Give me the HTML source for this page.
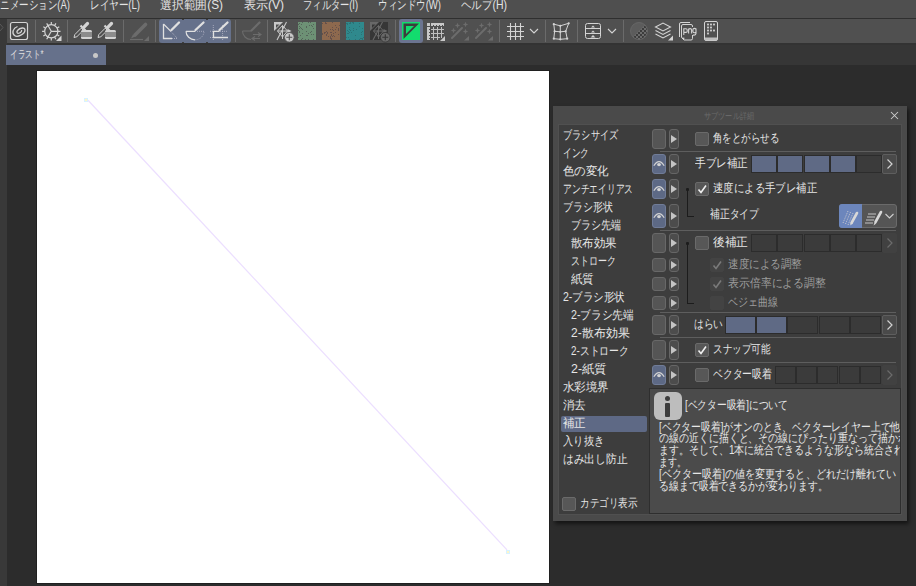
<!DOCTYPE html>
<html><head><meta charset="utf-8"><style>*{margin:0;padding:0;box-sizing:border-box}
html,body{width:916px;height:586px;overflow:hidden;background:#2c2c2c;font-family:"Liberation Sans",sans-serif;}
.a{position:absolute}
.t{position:absolute;white-space:nowrap;transform-origin:0 50%}
.eye{left:652px;width:14px;background:#555;border:1px solid #686868;border-radius:3px}
.eye.on{background:#5d6985;border-color:#707c98}
.eye svg,.arr svg,.gt svg,.cb svg{position:absolute;left:0;top:0}
.arr{left:669px;width:10px;background:#4c4c4c;border:1px solid #666;border-radius:3px}
.tree{border-left:1px solid #1c1c1c;border-bottom:1px solid #1c1c1c}
.dot{width:3px;height:3px;background:#1c1c1c;border-radius:1px}
.cb{width:14px;height:14px;background:#575757;border:1px solid #6a6a6a;border-radius:2px}
.cb.dis{background:#434343;border-color:#434343}
.seg{height:18px;border:1px solid #2c2c2c}
.gt{left:882px;width:15px;height:20px;background:#4a4a4a;border:1px solid #5e5e5e;border-radius:2px}
.gt.dis{background:#414141;border-color:#414141}
.sep{position:absolute;top:20px;width:1px;height:22px;background:#6b6b6b}
</style></head><body>
<div class="a" style="left:0;top:0;width:916px;height:18px;background:#4f4f4f"></div>
<div class="a" style="left:0;top:18px;width:916px;height:1px;background:#2f2f2f"></div>
<div class="a" style="left:0;top:19px;width:7px;height:567px;background:#393939"></div>
<div class="a" style="left:7px;top:19px;width:909px;height:24px;background:#505050"></div>
<div class="a" style="left:7px;top:43px;width:909px;height:2px;background:#333"></div>
<div class="a" style="left:7px;top:45px;width:909px;height:20px;background:#363636"></div>
<div class="t" style="left:-9px;top:-2.0px;color:#e4e4e4;font-size:12px;line-height:14px;transform:scaleX(0.7900)">アニメーション(A)</div>
<div class="t" style="left:90px;top:-2.0px;color:#e4e4e4;font-size:12px;line-height:14px;transform:scaleX(0.7978)">レイヤー(L)</div>
<div class="t" style="left:160px;top:-2.0px;color:#e4e4e4;font-size:12px;line-height:14px;transform:scaleX(0.9844)">選択範囲(S)</div>
<div class="t" style="left:244px;top:-2.0px;color:#e4e4e4;font-size:12px;line-height:14px;transform:scaleX(1.0000)">表示(V)</div>
<div class="t" style="left:303px;top:-2.0px;color:#e4e4e4;font-size:12px;line-height:14px;transform:scaleX(0.7711)">フィルター(I)</div>
<div class="t" style="left:378px;top:-2.0px;color:#e4e4e4;font-size:12px;line-height:14px;transform:scaleX(0.7942)">ウィンドウ(W)</div>
<div class="t" style="left:461px;top:-2.0px;color:#e4e4e4;font-size:12px;line-height:14px;transform:scaleX(0.8733)">ヘルプ(H)</div>
<div class="sep" style="left:35px"></div>
<div class="sep" style="left:67px"></div>
<div class="sep" style="left:123px"></div>
<div class="sep" style="left:155px"></div>
<div class="sep" style="left:235px"></div>
<div class="sep" style="left:267px"></div>
<div class="sep" style="left:395px"></div>
<div class="sep" style="left:499px"></div>
<div class="sep" style="left:545px"></div>
<div class="sep" style="left:577px"></div>
<div class="sep" style="left:623px"></div>
<div class="a" style="left:159px;top:19px;width:72px;height:24px;background:#66718b;border-radius:3px"></div>
<div class="a" style="left:182px;top:19px;width:2px;height:1px;background:#3e3e3e"></div><div class="a" style="left:182px;top:42px;width:2px;height:1px;background:#3e3e3e"></div>
<div class="a" style="left:206px;top:19px;width:2px;height:1px;background:#3e3e3e"></div><div class="a" style="left:206px;top:42px;width:2px;height:1px;background:#3e3e3e"></div>
<div class="a" style="left:399px;top:19px;width:24px;height:24px;background:#6b7490;border-radius:3px"></div>
<svg class="a" style="left:0;top:0" width="916" height="45"><rect x="10.5" y="22.5" width="17" height="17" rx="2" fill="#474747" stroke="#d4d4d4" stroke-width="1.2"/><path d="M17.5 26.5C13 28 11.5 33 14.5 35.5C17.5 38 25 34 25 30C25 27 20 27.5 17.5 30.5C16 32.5 17.5 34 19.5 33C21 32.3 22 31 21.5 30" fill="none" stroke="#d4d4d4" stroke-width="1.3"/><circle cx="51.3" cy="31.3" r="6.6" fill="none" stroke="#d4d4d4" stroke-width="1.2"/><path d="M58.00 31.30L60.50 31.30M57.10 34.65L59.27 35.90M54.65 37.10L55.90 39.27M51.30 38.00L51.30 40.50M47.95 37.10L46.70 39.27M45.50 34.65L43.33 35.90M44.60 31.30L42.10 31.30M45.50 27.95L43.33 26.70M47.95 25.50L46.70 23.33M51.30 24.60L51.30 22.10M54.65 25.50L55.90 23.33M57.10 27.95L59.27 26.70" stroke="#d4d4d4" stroke-width="1.2"/><path d="M51.3 31.3L57.9 31.3M51.3 31.3L47.8 25.3M51.3 31.3L47.8 37.3" stroke="#d4d4d4" stroke-width="1.2"/><path d="M56 41L61.5 35.5V41Z" fill="#d4d4d4"/><g transform="translate(0,0)"><path d="M74 37.5L74.8 34.6L81.2 28.2L83.3 30.3L76.9 36.7Z" fill="#505050" stroke="#d4d4d4" stroke-width="1"/><path d="M80.5 25.5L85.5 30.5" stroke="#d4d4d4" stroke-width="2.2"/><path d="M84.2 26.8L87.5 23.5" stroke="#d4d4d4" stroke-width="3.2" stroke-linecap="round"/><rect x="81" y="30" width="11" height="9" rx="1.5" fill="#d4d4d4"/><rect x="81" y="32" width="11" height="5" fill="#8c8c8c"/></g><g transform="translate(24,0)"><path d="M74 37.5L74.8 34.6L81.2 28.2L83.3 30.3L76.9 36.7Z" fill="#505050" stroke="#d4d4d4" stroke-width="1"/><path d="M80.5 25.5L85.5 30.5" stroke="#d4d4d4" stroke-width="2.2"/><path d="M84.2 26.8L87.5 23.5" stroke="#d4d4d4" stroke-width="3.2" stroke-linecap="round"/><rect x="81" y="30" width="11" height="9" rx="1.5" fill="#d4d4d4"/><rect x="81" y="32" width="11" height="5" fill="#8c8c8c"/></g><path d="M135 35L145.5 24.5" stroke="#6c6c6c" stroke-width="3.6" stroke-linecap="round"/><path d="M131 38.5L133 34.5L135 36.5Z" fill="#6c6c6c"/><path d="M130 39.5H143" stroke="#6c6c6c" stroke-width="1.2"/><path d="M144 41L149 36V41Z" fill="#6c6c6c"/><path d="M163.5 24V38.5H172" fill="none" stroke="#e0e0e0" stroke-width="1.3"/><path d="M163.5 24L171 31.5" stroke="#e0e0e0" stroke-width="1.1"/><path d="M171 31.5L177 38M172 38.5H177" stroke="#b8b8c8" stroke-width="0.8" stroke-dasharray="1 1"/><path d="M171.5 30L179 22.5" stroke="#e0e0e0" stroke-width="2.3" stroke-linecap="round"/><path d="M186 31.3H195M186 31.3A9 8.5 0 0 0 195 39.8" fill="none" stroke="#e0e0e0" stroke-width="1.2"/><path d="M195 31.3H204A9 8.5 0 0 1 195 39.8" fill="none" stroke="#b8b8c8" stroke-width="0.8" stroke-dasharray="1 1"/><path d="M195.5 30L203.5 22.5" stroke="#e0e0e0" stroke-width="2.3" stroke-linecap="round"/><path d="M213.3 25V40M222.6 25V40M210 31.3H228M210 37.5H213" stroke="#b8b8c8" stroke-width="0.8" stroke-dasharray="1 1"/><path d="M219.5 31.3H213.5V37.5H228" fill="none" stroke="#e0e0e0" stroke-width="1.3"/><path d="M219.5 30L227.5 22.5" stroke="#e0e0e0" stroke-width="2.3" stroke-linecap="round"/><path d="M242.5 31H251M242.5 31A8.5 8.5 0 0 0 251 39.5" fill="none" stroke="#6c6c6c" stroke-width="1.1"/><path d="M251.5 30.5L259.5 22.5" stroke="#6c6c6c" stroke-width="2.2" stroke-linecap="round"/><path d="M253 34.5H260M258 32.5L261 34.5L258 36.5M260 38.5H253M255 36.5L252 38.5L255 40.5" fill="none" stroke="#6c6c6c" stroke-width="1.1"/><g transform="translate(0,0)"><path d="M274 22H283L274 31Z" fill="#c8c8c8"/><path d="M276 24.5H279.5L276 28Z" fill="#505050"/><path d="M286.5 22L277 40" stroke="#c8c8c8" stroke-width="1.1"/><path d="M277.5 31L282.5 25.5L287.5 31L282.5 37ZM282.5 25.5V39M277.5 31H290" fill="none" stroke="#c8c8c8" stroke-width="1"/><path d="M287.5 29L291.5 31L287.5 33Z" fill="#c8c8c8"/><circle cx="289.3" cy="37.3" r="4.8" fill="#c8c8c8" stroke="#505050" stroke-width="0.8"/><path d="M289.3 34.3V40.3M286.3 37.3H292.3" stroke="#505050" stroke-width="1.1"/></g><rect x="298" y="22" width="18" height="18" fill="#6d9175"/><rect x="322" y="22" width="18" height="18" fill="#8d694e"/><rect x="346" y="22" width="18" height="18" fill="#2f898d"/><rect x="370" y="22" width="18" height="18" fill="#363636"/><rect x="305" y="39" width="1" height="1" fill="#55635a"/><rect x="302" y="33" width="1" height="1" fill="#55635a"/><rect x="313" y="24" width="1" height="1" fill="#55635a"/><rect x="298" y="37" width="1" height="1" fill="#55635a"/><rect x="313" y="39" width="1" height="1" fill="#55635a"/><rect x="302" y="29" width="1" height="1" fill="#55635a"/><rect x="302" y="38" width="1" height="1" fill="#55635a"/><rect x="310" y="22" width="1" height="1" fill="#55635a"/><rect x="300" y="27" width="1" height="1" fill="#55635a"/><rect x="299" y="31" width="1" height="1" fill="#55635a"/><rect x="298" y="30" width="1" height="1" fill="#55635a"/><rect x="313" y="34" width="1" height="1" fill="#55635a"/><rect x="311" y="34" width="1" height="1" fill="#55635a"/><rect x="312" y="26" width="1" height="1" fill="#55635a"/><rect x="309" y="25" width="1" height="1" fill="#55635a"/><rect x="299" y="26" width="1" height="1" fill="#55635a"/><rect x="313" y="28" width="1" height="1" fill="#55635a"/><rect x="306" y="35" width="1" height="1" fill="#55635a"/><rect x="307" y="35" width="1" height="1" fill="#55635a"/><rect x="308" y="22" width="1" height="1" fill="#55635a"/><rect x="306" y="27" width="1" height="1" fill="#55635a"/><rect x="308" y="39" width="1" height="1" fill="#55635a"/><rect x="301" y="28" width="1" height="1" fill="#55635a"/><rect x="306" y="31" width="1" height="1" fill="#55635a"/><rect x="301" y="24" width="1" height="1" fill="#55635a"/><rect x="300" y="35" width="1" height="1" fill="#55635a"/><rect x="302" y="22" width="1" height="1" fill="#55635a"/><rect x="307" y="35" width="1" height="1" fill="#55635a"/><rect x="311" y="25" width="1" height="1" fill="#55635a"/><rect x="299" y="23" width="1" height="1" fill="#55635a"/><rect x="310" y="32" width="1" height="1" fill="#55635a"/><rect x="299" y="31" width="1" height="1" fill="#55635a"/><rect x="298" y="24" width="1" height="1" fill="#55635a"/><rect x="301" y="39" width="1" height="1" fill="#55635a"/><rect x="299" y="28" width="1" height="1" fill="#55635a"/><rect x="311" y="31" width="1" height="1" fill="#55635a"/><rect x="306" y="26" width="1" height="1" fill="#55635a"/><rect x="299" y="32" width="1" height="1" fill="#55635a"/><rect x="308" y="33" width="1" height="1" fill="#55635a"/><rect x="326" y="34" width="1" height="1" fill="#65504a"/><rect x="334" y="36" width="1" height="1" fill="#65504a"/><rect x="338" y="34" width="1" height="1" fill="#65504a"/><rect x="339" y="25" width="1" height="1" fill="#65504a"/><rect x="338" y="30" width="1" height="1" fill="#65504a"/><rect x="335" y="29" width="1" height="1" fill="#65504a"/><rect x="331" y="35" width="1" height="1" fill="#65504a"/><rect x="330" y="38" width="1" height="1" fill="#65504a"/><rect x="331" y="39" width="1" height="1" fill="#65504a"/><rect x="332" y="22" width="1" height="1" fill="#65504a"/><rect x="335" y="32" width="1" height="1" fill="#65504a"/><rect x="322" y="34" width="1" height="1" fill="#65504a"/><rect x="326" y="23" width="1" height="1" fill="#65504a"/><rect x="332" y="36" width="1" height="1" fill="#65504a"/><rect x="333" y="33" width="1" height="1" fill="#65504a"/><rect x="330" y="37" width="1" height="1" fill="#65504a"/><rect x="322" y="23" width="1" height="1" fill="#65504a"/><rect x="322" y="33" width="1" height="1" fill="#65504a"/><rect x="330" y="36" width="1" height="1" fill="#65504a"/><rect x="331" y="32" width="1" height="1" fill="#65504a"/><rect x="327" y="33" width="1" height="1" fill="#65504a"/><rect x="327" y="32" width="1" height="1" fill="#65504a"/><rect x="333" y="30" width="1" height="1" fill="#65504a"/><rect x="331" y="34" width="1" height="1" fill="#65504a"/><rect x="325" y="22" width="1" height="1" fill="#65504a"/><rect x="326" y="31" width="1" height="1" fill="#65504a"/><rect x="338" y="29" width="1" height="1" fill="#65504a"/><rect x="330" y="29" width="1" height="1" fill="#65504a"/><rect x="332" y="27" width="1" height="1" fill="#65504a"/><rect x="335" y="25" width="1" height="1" fill="#65504a"/><rect x="325" y="32" width="1" height="1" fill="#65504a"/><rect x="332" y="29" width="1" height="1" fill="#65504a"/><rect x="336" y="27" width="1" height="1" fill="#65504a"/><rect x="324" y="32" width="1" height="1" fill="#65504a"/><rect x="328" y="36" width="1" height="1" fill="#65504a"/><rect x="330" y="29" width="1" height="1" fill="#65504a"/><rect x="325" y="23" width="1" height="1" fill="#65504a"/><rect x="338" y="28" width="1" height="1" fill="#65504a"/><rect x="332" y="27" width="1" height="1" fill="#65504a"/><rect x="330" y="32" width="1" height="1" fill="#65504a"/><rect x="324" y="33" width="1" height="1" fill="#65504a"/><rect x="326" y="35" width="1" height="1" fill="#65504a"/><rect x="331" y="38" width="1" height="1" fill="#65504a"/><rect x="330" y="36" width="1" height="1" fill="#65504a"/><rect x="333" y="35" width="1" height="1" fill="#65504a"/><rect x="355" y="35" width="1" height="1" fill="#2c7074"/><rect x="359" y="23" width="1" height="1" fill="#2c7074"/><rect x="359" y="26" width="1" height="1" fill="#2c7074"/><rect x="352" y="22" width="1" height="1" fill="#2c7074"/><rect x="361" y="38" width="1" height="1" fill="#2c7074"/><rect x="359" y="39" width="1" height="1" fill="#2c7074"/><rect x="353" y="23" width="1" height="1" fill="#2c7074"/><rect x="360" y="38" width="1" height="1" fill="#2c7074"/><rect x="355" y="39" width="1" height="1" fill="#2c7074"/><rect x="356" y="29" width="1" height="1" fill="#2c7074"/><rect x="348" y="31" width="1" height="1" fill="#2c7074"/><rect x="349" y="29" width="1" height="1" fill="#2c7074"/><rect x="347" y="23" width="1" height="1" fill="#2c7074"/><rect x="362" y="28" width="1" height="1" fill="#2c7074"/><rect x="359" y="23" width="1" height="1" fill="#2c7074"/><rect x="346" y="37" width="1" height="1" fill="#2c7074"/><rect x="349" y="27" width="1" height="1" fill="#2c7074"/><rect x="362" y="31" width="1" height="1" fill="#2c7074"/><rect x="353" y="22" width="1" height="1" fill="#2c7074"/><rect x="362" y="39" width="1" height="1" fill="#2c7074"/><rect x="359" y="23" width="1" height="1" fill="#2c7074"/><rect x="349" y="32" width="1" height="1" fill="#2c7074"/><rect x="350" y="30" width="1" height="1" fill="#2c7074"/><rect x="363" y="37" width="1" height="1" fill="#2c7074"/><rect x="347" y="33" width="1" height="1" fill="#2c7074"/><rect x="353" y="28" width="1" height="1" fill="#2c7074"/><rect x="349" y="39" width="1" height="1" fill="#2c7074"/><rect x="349" y="27" width="1" height="1" fill="#2c7074"/><rect x="353" y="30" width="1" height="1" fill="#2c7074"/><rect x="350" y="22" width="1" height="1" fill="#2c7074"/><rect x="361" y="34" width="1" height="1" fill="#2c7074"/><rect x="347" y="30" width="1" height="1" fill="#2c7074"/><rect x="353" y="30" width="1" height="1" fill="#2c7074"/><rect x="362" y="38" width="1" height="1" fill="#2c7074"/><rect x="359" y="23" width="1" height="1" fill="#2c7074"/><rect x="361" y="32" width="1" height="1" fill="#2c7074"/><rect x="346" y="23" width="1" height="1" fill="#2c7074"/><rect x="350" y="23" width="1" height="1" fill="#2c7074"/><rect x="349" y="23" width="1" height="1" fill="#2c7074"/><rect x="348" y="37" width="1" height="1" fill="#2c7074"/><rect x="347" y="24" width="1" height="1" fill="#2c7074"/><rect x="362" y="38" width="1" height="1" fill="#2c7074"/><rect x="361" y="32" width="1" height="1" fill="#2c7074"/><rect x="351" y="32" width="1" height="1" fill="#2c7074"/><rect x="348" y="33" width="1" height="1" fill="#2c7074"/><g opacity="0.9"><g transform="translate(96,0)"><path d="M274 22H283L274 31Z" fill="#6e6e6e"/><path d="M276 24.5H279.5L276 28Z" fill="#363636"/><path d="M286.5 22L277 40" stroke="#6e6e6e" stroke-width="1.1"/><path d="M277.5 31L282.5 25.5L287.5 31L282.5 37ZM282.5 25.5V39M277.5 31H290" fill="none" stroke="#6e6e6e" stroke-width="1"/><path d="M287.5 29L291.5 31L287.5 33Z" fill="#6e6e6e"/><circle cx="289.3" cy="37.3" r="4.8" fill="#6e6e6e" stroke="#363636" stroke-width="0.8"/><path d="M289.3 34.3V40.3M286.3 37.3H292.3" stroke="#363636" stroke-width="1.1"/></g></g><rect x="402" y="22" width="18" height="18" fill="#12dc6e"/><path d="M403.5 23.5H419L403.5 39Z" fill="#3c3c3c"/><path d="M406 26H414L406 34Z" fill="#12dc6e"/><rect x="427" y="23" width="3" height="3" fill="#c8c8c8"/><rect x="431" y="23" width="13" height="3" fill="#c8c8c8"/><rect x="427" y="27" width="3" height="13" fill="#c8c8c8"/><path d="M433 25.5h1M436 25.5h1M439 25.5h1M442 25.5h1M429.5 29v1M429.5 32v1M429.5 35v1M429.5 38v1" stroke="#505050" stroke-width="1"/><path d="M433.5 27V40M437.5 27V40M441.5 27V38M431 29.5H444M431 33.5H444M431 37.5H440" stroke="#c0c0c0" stroke-width="1"/><path d="M440 41L445 36V41Z" fill="#c8c8c8"/><g transform="translate(0,0)"><path d="M452 38L462 28" stroke="#6c6c6c" stroke-width="2" stroke-linecap="round"/><path d="M457.5 22.7L458.3 24.7L460.3 25.5L458.3 26.3L457.5 28.3L456.7 26.3L454.7 25.5L456.7 24.7Z" fill="#6c6c6c"/><path d="M465.5 21.7L466.3 23.7L468.3 24.5L466.3 25.3L465.5 27.3L464.7 25.3L462.7 24.5L464.7 23.7Z" fill="#6c6c6c"/><path d="M453.5 27.7L454.3 29.7L456.3 30.5L454.3 31.3L453.5 33.3L452.7 31.3L450.7 30.5L452.7 29.7Z" fill="#6c6c6c"/><path d="M465.5 28.7L466.3 30.7L468.3 31.5L466.3 32.3L465.5 34.3L464.7 32.3L462.7 31.5L464.7 30.7Z" fill="#6c6c6c"/><path d="M464 40.5L469 36V40.5Z" fill="#6c6c6c"/></g><g transform="translate(24,0)"><path d="M452 38L462 28" stroke="#6c6c6c" stroke-width="2" stroke-linecap="round"/><path d="M457.5 22.7L458.3 24.7L460.3 25.5L458.3 26.3L457.5 28.3L456.7 26.3L454.7 25.5L456.7 24.7Z" fill="#6c6c6c"/><path d="M465.5 21.7L466.3 23.7L468.3 24.5L466.3 25.3L465.5 27.3L464.7 25.3L462.7 24.5L464.7 23.7Z" fill="#6c6c6c"/><path d="M453.5 27.7L454.3 29.7L456.3 30.5L454.3 31.3L453.5 33.3L452.7 31.3L450.7 30.5L452.7 29.7Z" fill="#6c6c6c"/><path d="M465.5 28.7L466.3 30.7L468.3 31.5L466.3 32.3L465.5 34.3L464.7 32.3L462.7 31.5L464.7 30.7Z" fill="#6c6c6c"/><path d="M464 40.5L469 36V40.5Z" fill="#6c6c6c"/></g><path d="M510.5 23V40M515.5 23V40M520.5 23V40M507 26.5H524M507 31.5H524M507 36.5H524" stroke="#d4d4d4" stroke-width="1.1"/><path d="M530 29L534 33L538 29" fill="none" stroke="#d4d4d4" stroke-width="1.1"/><path d="M553.8 24.2L560.3 25.8L568.7 23.3L565.7 31.3L567.2 38.7L560.3 39.3L553.8 38.7L554.6 31.3L553.8 24.2M554.6 31.3L560.3 31.8L565.7 31.3M560.3 25.8L560.3 31.8L560.3 39.3" fill="none" stroke="#d4d4d4" stroke-width="1"/><circle cx="553.8" cy="24.2" r="1.1" fill="#d4d4d4"/><circle cx="560.3" cy="25.8" r="1.1" fill="#d4d4d4"/><circle cx="568.7" cy="23.3" r="1.1" fill="#d4d4d4"/><circle cx="554.6" cy="31.3" r="1.1" fill="#d4d4d4"/><circle cx="560.3" cy="31.8" r="1.1" fill="#d4d4d4"/><circle cx="565.7" cy="31.3" r="1.1" fill="#d4d4d4"/><circle cx="553.8" cy="38.7" r="1.1" fill="#d4d4d4"/><circle cx="560.3" cy="39.3" r="1.1" fill="#d4d4d4"/><circle cx="567.2" cy="38.7" r="1.1" fill="#d4d4d4"/><rect x="585.5" y="23.5" width="15" height="15" rx="2" fill="none" stroke="#d4d4d4" stroke-width="1"/><path d="M585.5 28.5H600.5M585.5 33.5H600.5" stroke="#d4d4d4" stroke-width="1"/><path d="M591 27.5L593 25.5L595 27.5ZM591 32.5L593 30.5L595 32.5ZM590.5 37.5L593 35L595.5 37.5Z" fill="#d4d4d4"/><path d="M608 29L612 33L616 29" fill="none" stroke="#d4d4d4" stroke-width="1.1"/><defs><clipPath id="cc"><circle cx="639" cy="31" r="8.5"/></clipPath><pattern id="chk" x="630" y="22" width="4" height="4" patternUnits="userSpaceOnUse"><rect width="4" height="4" fill="#3c3c3c"/><rect width="2" height="2" fill="#6c6c6c"/><rect x="2" y="2" width="2" height="2" fill="#6c6c6c"/></pattern></defs><g clip-path="url(#cc)"><rect x="630" y="22" width="18" height="18" fill="#5c5c5c"/><path d="M648 22V40H630Z" fill="url(#chk)"/></g><circle cx="639" cy="31" r="8.5" fill="none" stroke="#6a6a6a" stroke-width="0.8"/><path d="M655.5 27L663 23L670.5 27L663 31Z" fill="none" stroke="#d4d4d4" stroke-width="1.1"/><path d="M655.5 30.5L663 34.5L670.5 30.5M655.5 34L663 38L670.5 34" fill="none" stroke="#d4d4d4" stroke-width="1.1"/><path d="M668 40.5L673 35.5V40.5Z" fill="#d4d4d4"/><path d="M679.5 37V24Q679.5 22.5 681 22.5H690" fill="none" stroke="#d4d4d4" stroke-width="1"/><path d="M681.5 37.5V26Q681.5 24.5 683 24.5H691Q692.5 24.5 692.5 26V38.5Q692.5 40 691 40H684Z" fill="#505050" stroke="#d4d4d4" stroke-width="1"/><path d="M681.5 37.5L684 40L684.5 37.8Z" fill="#d4d4d4"/><rect x="683" y="27" width="13.5" height="8" fill="#505050"/><path d="M683.8 28.3V35M683.8 28.8h2.2q1.2 0 1.2 1.2v1.2q0 1.2 -1.2 1.2h-2.2M688.6 33.4V28.6M688.6 29.5q0.6 -0.9 1.6 -0.9q1.4 0 1.4 1.4v3.4M696 28.5v4.8q0 1.8 -1.8 1.8h-1.2M696 29q-0.6 -0.6 -1.6 -0.6q-1.5 0 -1.5 1.5v1.3q0 1.5 1.5 1.5q1 0 1.6 -0.6" fill="none" stroke="#d4d4d4" stroke-width="1.1"/><rect x="704.5" y="21.5" width="13" height="19" rx="1.5" fill="none" stroke="#d4d4d4" stroke-width="1"/><rect x="705" y="37.5" width="12" height="3" fill="#bdbdbd"/><rect x="707.1" y="23.6" width="1.8" height="1.8" fill="#d4d4d4"/><rect x="707.1" y="26.6" width="1.8" height="1.8" fill="#d4d4d4"/><rect x="707.1" y="29.6" width="1.8" height="1.8" fill="#d4d4d4"/><rect x="707.1" y="32.6" width="1.8" height="1.8" fill="#d4d4d4"/><rect x="710.1" y="23.6" width="1.8" height="1.8" fill="#d4d4d4"/><rect x="710.1" y="26.6" width="1.8" height="1.8" fill="#d4d4d4"/><rect x="710.1" y="29.6" width="1.8" height="1.8" fill="#d4d4d4"/><rect x="713.1" y="23.6" width="1.8" height="1.8" fill="#d4d4d4"/><rect x="713.1" y="29.6" width="1.8" height="1.8" fill="#d4d4d4"/><path d="M0 24L3 27.5L0 31" fill="none" stroke="#5a5a5a" stroke-width="1"/></svg>
<div class="a" style="left:6px;top:45px;width:100px;height:20px;background:#66718b"></div>
<div class="t" style="left:10px;top:46.5px;color:#e0e0e0;font-size:11px;line-height:14px;transform:scaleX(0.6939)">イラスト*</div>
<div class="a" style="left:93px;top:53px;width:5px;height:5px;border-radius:50%;background:#c8c8c8"></div>
<div class="a" style="left:7px;top:65px;width:909px;height:521px;background:#2c2c2c"></div>
<div class="a" style="left:36px;top:70px;width:514px;height:514px;background:#202020"></div>
<div class="a" style="left:37px;top:71px;width:512px;height:512px;background:#fff"></div>
<svg class="a" style="left:0;top:0" width="916" height="586"><line x1="88" y1="100.3" x2="507" y2="549.9" stroke="#ecdfff" stroke-width="1.25"/><rect x="84.5" y="98.5" width="3" height="3" fill="#fff6c8" stroke="#d8f2ff" stroke-width="1"/><rect x="506.5" y="550.5" width="3" height="3" fill="#fff6c8" stroke="#d8f2ff" stroke-width="1"/></svg>
<div class="a" style="left:553px;top:106px;width:354px;height:415px;background:#4a4a4a;box-shadow:2px 3px 4px rgba(0,0,0,0.55)"></div>
<div class="t" style="left:704px;top:111.0px;color:#6a6a6a;font-size:9px;line-height:10px;transform:scaleX(0.7937)">サブツール詳細</div>
<svg class="a" style="left:888px;top:109px" width="14" height="14"><path d="M3 3L10 10M10 3L3 10" stroke="#cccccc" stroke-width="1.05"/></svg>
<div class="a" style="left:558px;top:124px;width:344px;height:391px;background:#3d3d3d;border:1px solid #505050"></div>
<div class="a" style="left:561px;top:416px;width:86px;height:16px;background:#5e6985;border-radius:2px"></div>
<div class="t" style="left:563px;top:127.5px;color:#e6e6e6;font-size:12px;line-height:14px;transform:scaleX(0.7639)">ブラシサイズ</div>
<div class="t" style="left:563px;top:145.5px;color:#e6e6e6;font-size:12px;line-height:14px;transform:scaleX(0.7222)">インク</div>
<div class="t" style="left:563px;top:163.5px;color:#e6e6e6;font-size:12px;line-height:14px;transform:scaleX(0.9583)">色の変化</div>
<div class="t" style="left:563px;top:181.5px;color:#e6e6e6;font-size:12px;line-height:14px;transform:scaleX(0.7292)">アンチエイリアス</div>
<div class="t" style="left:563px;top:199.5px;color:#e6e6e6;font-size:12px;line-height:14px;transform:scaleX(0.8333)">ブラシ形状</div>
<div class="t" style="left:571px;top:217.5px;color:#e6e6e6;font-size:12px;line-height:14px;transform:scaleX(0.8333)">ブラシ先端</div>
<div class="t" style="left:571px;top:235.5px;color:#e6e6e6;font-size:12px;line-height:14px;transform:scaleX(0.9583)">散布効果</div>
<div class="t" style="left:571px;top:253.5px;color:#e6e6e6;font-size:12px;line-height:14px;transform:scaleX(0.7500)">ストローク</div>
<div class="t" style="left:571px;top:271.5px;color:#e6e6e6;font-size:12px;line-height:14px;transform:scaleX(0.9583)">紙質</div>
<div class="t" style="left:563px;top:289.5px;color:#e6e6e6;font-size:12px;line-height:14px;transform:scaleX(0.8773)">2-ブラシ形状</div>
<div class="t" style="left:571px;top:307.5px;color:#e6e6e6;font-size:12px;line-height:14px;transform:scaleX(0.8886)">2-ブラシ先端</div>
<div class="t" style="left:571px;top:325.5px;color:#e6e6e6;font-size:12px;line-height:14px;transform:scaleX(1.0022)">2-散布効果</div>
<div class="t" style="left:571px;top:343.5px;color:#e6e6e6;font-size:12px;line-height:14px;transform:scaleX(0.8179)">2-ストローク</div>
<div class="t" style="left:571px;top:361.5px;color:#e6e6e6;font-size:12px;line-height:14px;transform:scaleX(1.0325)">2-紙質</div>
<div class="t" style="left:563px;top:379.5px;color:#e6e6e6;font-size:12px;line-height:14px;transform:scaleX(0.9583)">水彩境界</div>
<div class="t" style="left:563px;top:397.5px;color:#e6e6e6;font-size:12px;line-height:14px;transform:scaleX(0.9583)">消去</div>
<div class="t" style="left:563px;top:415.5px;color:#e6e6e6;font-size:12px;line-height:14px;transform:scaleX(0.9583)">補正</div>
<div class="t" style="left:563px;top:433.5px;color:#e6e6e6;font-size:12px;line-height:14px;transform:scaleX(0.8542)">入り抜き</div>
<div class="t" style="left:563px;top:451.5px;color:#e6e6e6;font-size:12px;line-height:14px;transform:scaleX(0.8958)">はみ出し防止</div>
<div class="a eye" style="top:129px;height:20px"></div>
<div class="a arr" style="top:129px;height:20px"><svg width="8" height="18"><path d="M1 5.0L7 9.0L1 13.0Z" fill="#c4c4c4"/></svg></div>
<div class="a eye on" style="top:154px;height:20px"><svg width="12" height="18"><g transform="translate(0,0.0)"><path d="M0.8 10.8Q6 2.4 11.2 10.8" stroke="#d2d2d2" stroke-width="1.2" fill="none"/><ellipse cx="6" cy="9.6" rx="1.9" ry="1.6" fill="#d4d4d4"/></g></svg></div>
<div class="a arr" style="top:154px;height:20px"><svg width="8" height="18"><path d="M1 5.0L7 9.0L1 13.0Z" fill="#c4c4c4"/></svg></div>
<div class="a eye on" style="top:179px;height:20px"><svg width="12" height="18"><g transform="translate(0,0.0)"><path d="M0.8 10.8Q6 2.4 11.2 10.8" stroke="#d2d2d2" stroke-width="1.2" fill="none"/><ellipse cx="6" cy="9.6" rx="1.9" ry="1.6" fill="#d4d4d4"/></g></svg></div>
<div class="a arr" style="top:179px;height:20px"><svg width="8" height="18"><path d="M1 5.0L7 9.0L1 13.0Z" fill="#c4c4c4"/></svg></div>
<div class="a eye on" style="top:204px;height:24px"><svg width="12" height="22"><g transform="translate(0,2.0)"><path d="M0.8 10.8Q6 2.4 11.2 10.8" stroke="#d2d2d2" stroke-width="1.2" fill="none"/><ellipse cx="6" cy="9.6" rx="1.9" ry="1.6" fill="#d4d4d4"/></g></svg></div>
<div class="a arr" style="top:204px;height:24px"><svg width="8" height="22"><path d="M1 7.0L7 11.0L1 15.0Z" fill="#c4c4c4"/></svg></div>
<div class="a eye" style="top:233px;height:20px"></div>
<div class="a arr" style="top:233px;height:20px"><svg width="8" height="18"><path d="M1 5.0L7 9.0L1 13.0Z" fill="#c4c4c4"/></svg></div>
<div class="a eye" style="top:258px;height:14px"></div>
<div class="a arr" style="top:258px;height:14px"><svg width="8" height="12"><path d="M1 2.0L7 6.0L1 10.0Z" fill="#c4c4c4"/></svg></div>
<div class="a eye" style="top:277px;height:14px"></div>
<div class="a arr" style="top:277px;height:14px"><svg width="8" height="12"><path d="M1 2.0L7 6.0L1 10.0Z" fill="#c4c4c4"/></svg></div>
<div class="a eye" style="top:296px;height:14px"></div>
<div class="a arr" style="top:296px;height:14px"><svg width="8" height="12"><path d="M1 2.0L7 6.0L1 10.0Z" fill="#c4c4c4"/></svg></div>
<div class="a eye" style="top:315px;height:20px"></div>
<div class="a arr" style="top:315px;height:20px"><svg width="8" height="18"><path d="M1 5.0L7 9.0L1 13.0Z" fill="#c4c4c4"/></svg></div>
<div class="a eye" style="top:340px;height:20px"></div>
<div class="a arr" style="top:340px;height:20px"><svg width="8" height="18"><path d="M1 5.0L7 9.0L1 13.0Z" fill="#c4c4c4"/></svg></div>
<div class="a eye on" style="top:365px;height:20px"><svg width="12" height="18"><g transform="translate(0,0.0)"><path d="M0.8 10.8Q6 2.4 11.2 10.8" stroke="#d2d2d2" stroke-width="1.2" fill="none"/><ellipse cx="6" cy="9.6" rx="1.9" ry="1.6" fill="#d4d4d4"/></g></svg></div>
<div class="a arr" style="top:365px;height:20px"><svg width="8" height="18"><path d="M1 5.0L7 9.0L1 13.0Z" fill="#c4c4c4"/></svg></div>
<div class="a" style="left:660px;top:151px;width:236px;height:1px;background:#5e5e5e"></div>
<div class="a" style="left:660px;top:230px;width:236px;height:1px;background:#5e5e5e"></div>
<div class="a" style="left:660px;top:312px;width:236px;height:1px;background:#5e5e5e"></div>
<div class="a" style="left:660px;top:337px;width:236px;height:1px;background:#5e5e5e"></div>
<div class="a" style="left:660px;top:362px;width:236px;height:1px;background:#5e5e5e"></div>
<div class="a tree" style="left:687px;top:189px;width:7px;height:28px"></div><div class="a dot" style="left:686px;top:188px"></div>
<div class="a tree" style="left:687px;top:243px;width:7px;height:61px"></div><div class="a dot" style="left:686px;top:242px"></div>
<div class="a cb" style="left:695px;top:132px"></div>
<div class="a cb" style="left:695px;top:182px"><svg width="12" height="12"><path d="M2.5 6.5L5 9.5L10 2.5" stroke="#f0f0f0" stroke-width="1.6" fill="none"/></svg></div>
<div class="a cb" style="left:695px;top:236px"></div>
<div class="a cb dis" style="left:710px;top:258px"><svg width="12" height="12"><path d="M2.5 6.5L5 9.5L10 2.5" stroke="#7a7a7a" stroke-width="1.6" fill="none"/></svg></div>
<div class="a cb dis" style="left:710px;top:277px"><svg width="12" height="12"><path d="M2.5 6.5L5 9.5L10 2.5" stroke="#7a7a7a" stroke-width="1.6" fill="none"/></svg></div>
<div class="a cb dis" style="left:710px;top:296px"></div>
<div class="a cb" style="left:695px;top:343px"><svg width="12" height="12"><path d="M2.5 6.5L5 9.5L10 2.5" stroke="#f0f0f0" stroke-width="1.6" fill="none"/></svg></div>
<div class="a cb" style="left:695px;top:368px"></div>
<div class="a cb" style="left:562px;top:497px"></div>
<div class="t" style="left:580px;top:496.0px;color:#e6e6e6;font-size:12px;line-height:14px;transform:scaleX(0.7917)">カテゴリ表示</div>
<div class="t" style="left:713px;top:130.5px;color:#e6e6e6;font-size:12px;line-height:14px;transform:scaleX(0.7857)">角をとがらせる</div>
<div class="t" style="left:695px;top:155.5px;color:#e6e6e6;font-size:12px;line-height:14px;transform:scaleX(0.8833)">手ブレ補正</div>
<div class="t" style="left:713px;top:180.5px;color:#e6e6e6;font-size:12px;line-height:14px;transform:scaleX(0.8667)">速度による手ブレ補正</div>
<div class="t" style="left:710px;top:207.0px;color:#e6e6e6;font-size:12px;line-height:14px;transform:scaleX(0.8167)">補正タイプ</div>
<div class="t" style="left:713px;top:235.0px;color:#e6e6e6;font-size:12px;line-height:14px;transform:scaleX(0.9722)">後補正</div>
<div class="t" style="left:728px;top:257.0px;color:#9c9c9c;font-size:12px;line-height:14px;transform:scaleX(0.8810)">速度による調整</div>
<div class="t" style="left:728px;top:276.0px;color:#9c9c9c;font-size:12px;line-height:14px;transform:scaleX(0.9074)">表示倍率による調整</div>
<div class="t" style="left:728px;top:294.5px;color:#9c9c9c;font-size:12px;line-height:14px;transform:scaleX(0.8333)">ベジェ曲線</div>
<div class="t" style="left:694px;top:316.5px;color:#e6e6e6;font-size:12px;line-height:14px;transform:scaleX(0.8056)">はらい</div>
<div class="t" style="left:713px;top:341.5px;color:#e6e6e6;font-size:12px;line-height:14px;transform:scaleX(0.7986)">スナップ可能</div>
<div class="t" style="left:713px;top:366.5px;color:#e6e6e6;font-size:12px;line-height:14px;transform:scaleX(0.8194)">ベクター吸着</div>
<div class="a seg" style="left:751px;top:155px;width:26px;background:#5f6a85"></div>
<div class="a seg" style="left:777px;top:155px;width:26px;background:#5f6a85"></div>
<div class="a seg" style="left:804px;top:155px;width:26px;background:#5f6a85"></div>
<div class="a seg" style="left:830px;top:155px;width:26px;background:#5f6a85"></div>
<div class="a seg" style="left:856px;top:155px;width:26px;background:#3b3b3b"></div>
<div class="a seg" style="left:751px;top:234px;width:26px;background:#3b3b3b"></div>
<div class="a seg" style="left:777px;top:234px;width:26px;background:#3b3b3b"></div>
<div class="a seg" style="left:804px;top:234px;width:26px;background:#3b3b3b"></div>
<div class="a seg" style="left:830px;top:234px;width:26px;background:#3b3b3b"></div>
<div class="a seg" style="left:856px;top:234px;width:26px;background:#3b3b3b"></div>
<div class="a seg" style="left:725px;top:316px;width:31px;background:#5f6a85"></div>
<div class="a seg" style="left:756px;top:316px;width:31px;background:#5f6a85"></div>
<div class="a seg" style="left:787px;top:316px;width:31px;background:#3b3b3b"></div>
<div class="a seg" style="left:819px;top:316px;width:31px;background:#3b3b3b"></div>
<div class="a seg" style="left:850px;top:316px;width:31px;background:#3b3b3b"></div>
<div class="a seg" style="left:775px;top:366px;width:21px;background:#3b3b3b"></div>
<div class="a seg" style="left:796px;top:366px;width:21px;background:#3b3b3b"></div>
<div class="a seg" style="left:817px;top:366px;width:21px;background:#3b3b3b"></div>
<div class="a seg" style="left:839px;top:366px;width:21px;background:#3b3b3b"></div>
<div class="a seg" style="left:860px;top:366px;width:21px;background:#3b3b3b"></div>
<div class="a gt" style="top:154px"><svg width="13" height="18"><path d="M4.5 4.5L9 9L4.5 13.5" stroke="#d2d2d2" stroke-width="1.2" fill="none"/></svg></div>
<div class="a gt dis" style="top:233px"><svg width="13" height="18"><path d="M4.5 4.5L9 9L4.5 13.5" stroke="#6c6c6c" stroke-width="1.2" fill="none"/></svg></div>
<div class="a gt" style="top:315px"><svg width="13" height="18"><path d="M4.5 4.5L9 9L4.5 13.5" stroke="#d2d2d2" stroke-width="1.2" fill="none"/></svg></div>
<div class="a gt dis" style="top:365px"><svg width="13" height="18"><path d="M4.5 4.5L9 9L4.5 13.5" stroke="#6c6c6c" stroke-width="1.2" fill="none"/></svg></div>
<div class="a" style="left:839px;top:204px;width:58px;height:24px;background:#555;border:1px solid #6a6a6a;border-radius:3px"></div>
<div class="a" style="left:839px;top:204px;width:23px;height:24px;background:#6c86bc;border-radius:3px 0 0 3px"></div>
<svg class="a" style="left:839px;top:204px" width="58" height="24"><path d="M4 19L9 7M6.5 20L11.5 8M9 21L14 9" stroke="#c8c8d0" stroke-width="1" stroke-dasharray="1 1"/><path d="M12.5 19L18 9" stroke="#d8d8d8" stroke-width="2.6" stroke-linecap="round"/><path d="M11 21.5L12 18.5L13.8 19.6Z" fill="#d8d8d8"/><path d="M26 19H34M27 16H35M28 13H36M29 10H37" stroke="#c4c4c4" stroke-width="1.1"/><path d="M36.5 18L42 8" stroke="#d8d8d8" stroke-width="2.6" stroke-linecap="round"/><path d="M34.5 21.5L35.5 18.5L37.3 19.6Z" fill="#d8d8d8"/><path d="M46.5 10L50.5 14L54.5 10" fill="none" stroke="#d0d0d0" stroke-width="1.1"/></svg>
<div class="a" style="left:649px;top:388px;width:252px;height:126px;background:#4b4b4b;border:1px solid #2e2e2e"></div>
<div class="a" style="left:654px;top:392px;width:28px;height:28px;background:#bdbdbd;border-radius:6px"></div>
<div class="a" style="left:665px;top:396px;width:5px;height:5px;background:#3c3c3c;border-radius:50%"></div>
<div class="a" style="left:665px;top:403px;width:5px;height:14px;background:#3c3c3c;border-radius:1px"></div>
<div class="t" style="left:685px;top:398.0px;color:#e6e6e6;font-size:12px;line-height:14px;transform:scaleX(0.8131)">[ベクター吸着]について</div>
<div class="a" style="left:650px;top:389px;width:250px;height:124px;overflow:hidden">
<div class="t" style="left:9px;top:30.5px;color:#e6e6e6;font-size:12px;line-height:14px;transform:scaleX(0.8188)">[ベクター吸着]がオンのとき、ベクターレイヤー上で他</div>
<div class="t" style="left:9px;top:42.35000000000002px;color:#e6e6e6;font-size:12px;line-height:14px;transform:scaleX(0.8285)">の線の近くに描くと、その線にぴったり重なって描かれ</div>
<div class="t" style="left:9px;top:54.19999999999999px;color:#e6e6e6;font-size:12px;line-height:14px;transform:scaleX(0.8322)">ます。そして、1本に統合できるような形なら統合され</div>
<div class="t" style="left:9px;top:66.05000000000001px;color:#e6e6e6;font-size:12px;line-height:14px;transform:scaleX(0.7511)">ます。</div>
<div class="t" style="left:9px;top:77.89999999999998px;color:#e6e6e6;font-size:12px;line-height:14px;transform:scaleX(0.8389)">[ベクター吸着]の値を変更すると、どれだけ離れてい</div>
<div class="t" style="left:9px;top:89.75px;color:#e6e6e6;font-size:12px;line-height:14px;transform:scaleX(0.8259)">る線まで吸着できるかが変わります。</div>
</div>
</body></html>
